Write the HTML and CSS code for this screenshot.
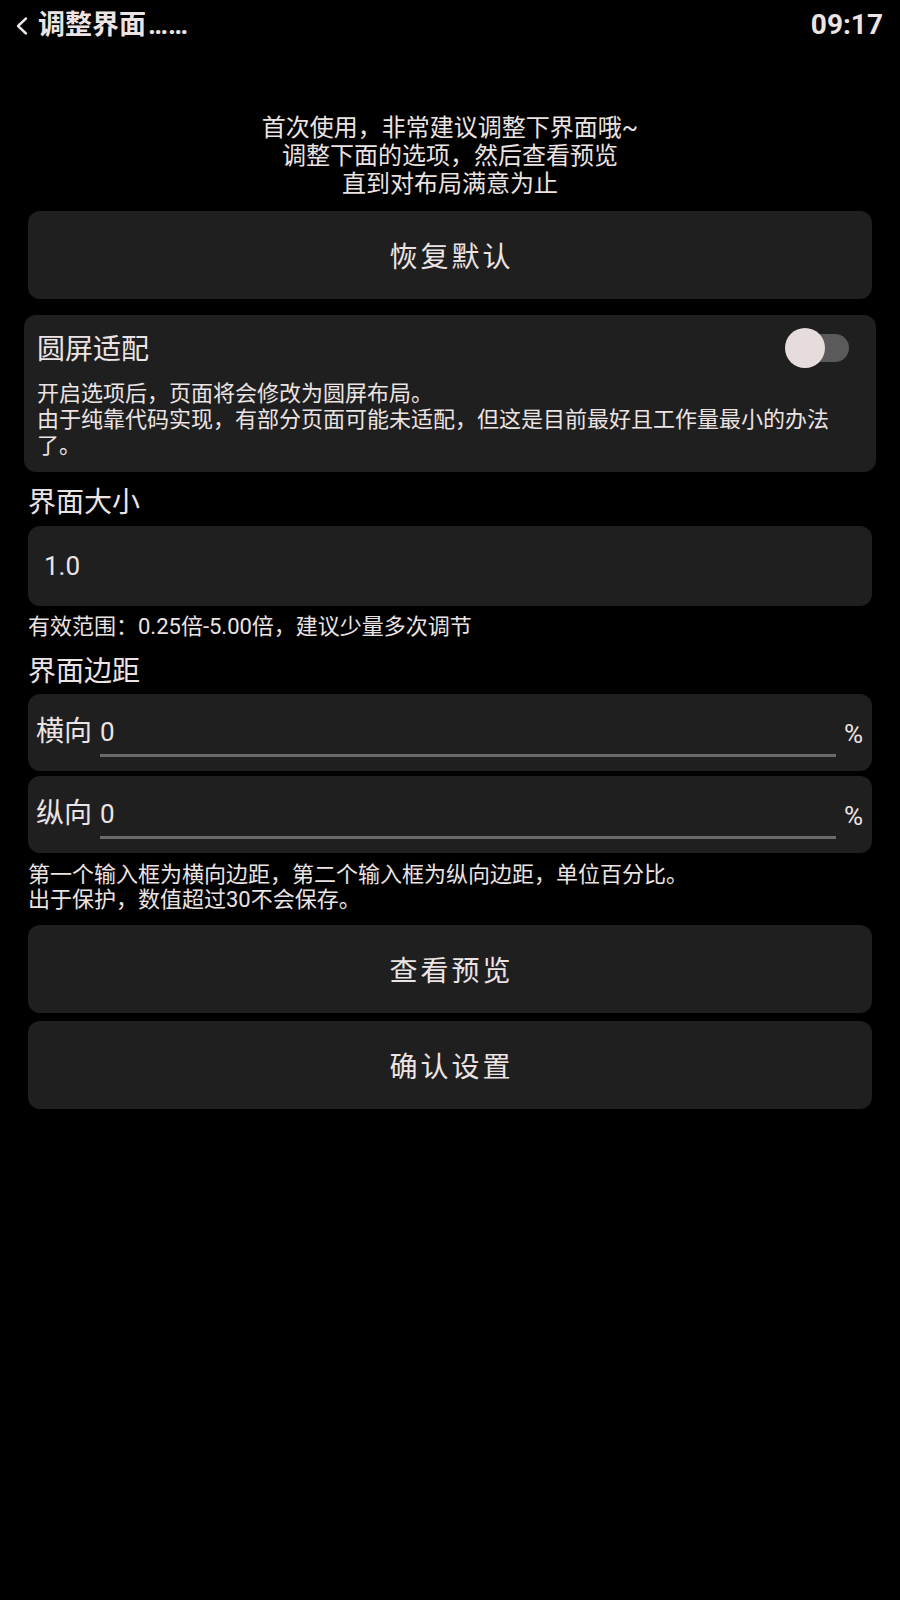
FILE: index.html
```html
<!DOCTYPE html>
<html lang="zh-CN">
<head>
<meta charset="utf-8">
<title>调整界面</title>
<link rel="stylesheet" href="styles.css">
</head>
<body>
<div class="topbar">
  <div class="back">
    <svg class="back-icon" width="14" height="20" viewBox="0 0 14 20"><path d="M11 2.5 L3 10 L11 17.5" fill="none" stroke="#ece4e4" stroke-width="2.4" stroke-linecap="round" stroke-linejoin="round"/></svg>
    <span class="title">调整界面<span class="dots">……</span></span>
  </div>
  <span class="clock">09:17</span>
</div>
<main class="page">
  <p class="intro">首次使用，非常建议调整下界面哦~<br>调整下面的选项，然后查看预览<br>直到对布局满意为止</p>
  <div class="btn btn-first">恢复默认</div>
  <section class="card">
    <div class="card-head">
      <span class="card-title">圆屏适配</span>
      <span class="switch"><span class="switch-track"></span><span class="switch-thumb"></span></span>
    </div>
    <p class="card-desc">开启选项后，页面将会修改为圆屏布局。<br>由于纯靠代码实现，有部分页面可能未适配，但这是目前最好且工作量最小的办法<br>了。</p>
  </section>
  <h2 class="sec-title">界面大小</h2>
  <div class="input-box">1.0</div>
  <p class="hint">有效范围：0.25倍-5.00倍，建议少量多次调节</p>
  <h2 class="sec-title sec-title-2">界面边距</h2>
  <div class="field-box">
    <span class="field-label">横向</span>
    <span class="field-input">0</span>
    <span class="field-unit">%</span>
  </div>
  <div class="field-box field-box-2">
    <span class="field-label">纵向</span>
    <span class="field-input">0</span>
    <span class="field-unit">%</span>
  </div>
  <p class="notes">第一个输入框为横向边距，第二个输入框为纵向边距，单位百分比。<br>出于保护，数值超过30不会保存。</p>
  <div class="btn btn-preview">查看预览</div>
  <div class="btn btn-confirm">确认设置</div>
</main>
</body>
</html>
```
FILE: styles.css
```css
html, body {
  margin: 0;
  padding: 0;
  background: #000;
}
body {
  width: 900px;
  min-height: 1600px;
  color: #ece4e4;
  font-family: Roboto, "Noto Sans CJK SC", sans-serif;
}
.topbar {
  height: 50px;
  display: flex;
  align-items: center;
  justify-content: space-between;
  padding: 0 17px 0 15px;
}
.back {
  display: flex;
  align-items: center;
  gap: 9px;
}
.back-icon {
  display: block;
  margin-top: 1px;
}
.title {
  font-size: 27px;
  font-weight: 700;
  line-height: 36px;
}
.dots {
  margin-left: 2px;
}
.clock {
  font-size: 28px;
  font-weight: 700;
  line-height: 36px;
}
.page {
  padding: 0 28px;
}
.intro {
  margin: 64px 0 0;
  text-align: center;
  font-size: 24px;
  line-height: 28px;
}
.btn {
  height: 88px;
  background: #1f1f1f;
  border-radius: 12px;
  display: flex;
  align-items: center;
  justify-content: center;
  font-size: 28px;
  letter-spacing: 3px;
  text-indent: 3px;
}
.btn-first {
  margin-top: 13px;
}
.card {
  margin: 16px -4px 0;
  background: #1f1f1f;
  border-radius: 12px;
  padding: 16px 20px 13px 13px;
}
.card-head {
  display: flex;
  align-items: center;
  justify-content: space-between;
}
.card-title {
  font-size: 28px;
  line-height: 36px;
}
.switch {
  position: relative;
  width: 68px;
  height: 40px;
  margin-right: 7px;
  margin-top: -3px;
}
.switch-track {
  position: absolute;
  left: 10px;
  top: 6px;
  width: 58px;
  height: 28px;
  border-radius: 14px;
  background: #5a5a5a;
}
.switch-thumb {
  position: absolute;
  left: 4px;
  top: 0;
  width: 40px;
  height: 40px;
  border-radius: 50%;
  background: #e6dcdc;
}
.card-desc {
  margin: 13px 0 0;
  font-size: 22px;
  line-height: 26px;
}
.sec-title {
  margin: 13px 0 0;
  font-size: 28px;
  font-weight: 400;
  line-height: 36px;
}
.sec-title-2 {
  margin-top: 14px;
}
.input-box {
  margin-top: 5px;
  height: 80px;
  background: #1f1f1f;
  border-radius: 12px;
  display: flex;
  align-items: center;
  padding-left: 16px;
  font-size: 26px;
}
.hint {
  margin: 8px 0 0;
  font-size: 22px;
  line-height: 26px;
}
.field-box {
  margin-top: 4px;
  height: 77px;
  box-sizing: border-box;
  background: #1f1f1f;
  border-radius: 12px;
  display: flex;
  align-items: flex-start;
  padding: 20px 9px 0 8px;
}
.field-box-2 {
  margin-top: 5px;
}
.field-label {
  font-size: 28px;
  line-height: 36px;
}
.field-input {
  flex: 1;
  margin-left: 8px;
  font-size: 26px;
  line-height: 36px;
  padding-bottom: 4px;
  border-bottom: 3px solid #6a6a6a;
}
.field-unit {
  margin-left: 8px;
  font-size: 26px;
  line-height: 40px;
}
.notes {
  margin: 9px 0 0;
  font-size: 22px;
  line-height: 25px;
}
.btn-preview {
  margin-top: 13px;
}
.btn-confirm {
  margin-top: 8px;
}
```
